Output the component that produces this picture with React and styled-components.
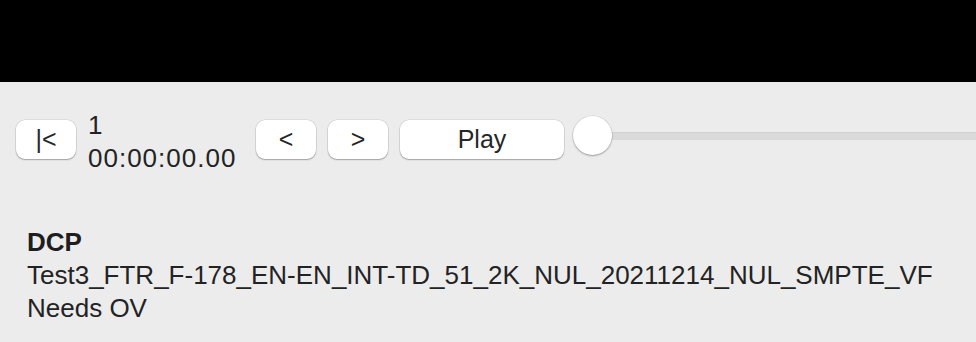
import React from "react";
import styled, { createGlobalStyle } from "styled-components";

const Global = createGlobalStyle`
  html, body { margin: 0; padding: 0; background: #ececec; overflow: hidden; }
  body { font-family: "Liberation Sans", Arial, sans-serif; color: #232323; }
`;

const Page = styled.div`
  width: 976px;
  height: 342px;
  background: #ececec;
  display: flex;
  flex-direction: column;
`;

const TitleBar = styled.div`
  height: 82px;
  background: #000;
  flex: none;
`;

const Toolbar = styled.div`
  display: flex;
  align-items: flex-start;
  padding: 27px 0 0 16px;
`;

const Button = styled.button`
  flex: none;
  margin-top: 11px;
  width: ${(p) => p.$w || 60}px;
  height: 39px;
  border: none;
  border-radius: 9px;
  background: #fff;
  box-shadow: 0 0 0 0.5px rgba(0, 0, 0, 0.12), 0 1px 1.5px rgba(0, 0, 0, 0.28);
  font-family: "Liberation Sans", Arial, sans-serif;
  font-size: 25px;
  color: #262626;
  padding: 0;
  display: flex;
  align-items: center;
  justify-content: center;
  margin-right: ${(p) => p.$mr ?? 12}px;
`;

const TimeBlock = styled.div`
  flex: none;
  width: 156px;
  margin-right: 12px;
  font-size: 26px;
  line-height: 33px;
  color: #232323;
`;

const TimeLine = styled.div`
  letter-spacing: ${(p) => p.$ls || 0}px;
`;

const Slider = styled.div`
  flex: 1;
  margin-top: 6px;
  height: 40px;
  display: flex;
  align-items: center;
  margin-left: -3px;
`;

const Knob = styled.div`
  flex: none;
  width: 39px;
  height: 39px;
  border-radius: 50%;
  background: #fff;
  box-shadow: 0 0 0 0.5px rgba(0, 0, 0, 0.1), 0 1px 2px rgba(0, 0, 0, 0.3);
  position: relative;
  z-index: 1;
`;

const Track = styled.div`
  flex: 1;
  height: 8px;
  margin-top: 2px;
  background: #dadada;
  box-shadow: inset 0 1px 0 rgba(0, 0, 0, 0.04);
`;

const Info = styled.div`
  margin-top: 51px;
  padding-left: 27px;
  font-size: 26px;
  line-height: 33px;
  color: #232323;
`;

const Heading = styled.div`
  font-weight: bold;
  color: #1e1e1e;
`;

export default function App() {
  return (
    <Page>
      <Global />
      <TitleBar />
      <Toolbar>
        <Button>|&lt;</Button>
        <TimeBlock>
          <TimeLine>1</TimeLine>
          <TimeLine $ls={1}>00:00:00.00</TimeLine>
        </TimeBlock>
        <Button>&lt;</Button>
        <Button>&gt;</Button>
        <Button $w={164}>Play</Button>
        <Slider>
          <Knob />
          <Track />
        </Slider>
      </Toolbar>
      <Info>
        <Heading>DCP</Heading>
        <div>Test3_FTR_F-178_EN-EN_INT-TD_51_2K_NUL_20211214_NUL_SMPTE_VF</div>
        <div>Needs OV</div>
      </Info>
    </Page>
  );
}
